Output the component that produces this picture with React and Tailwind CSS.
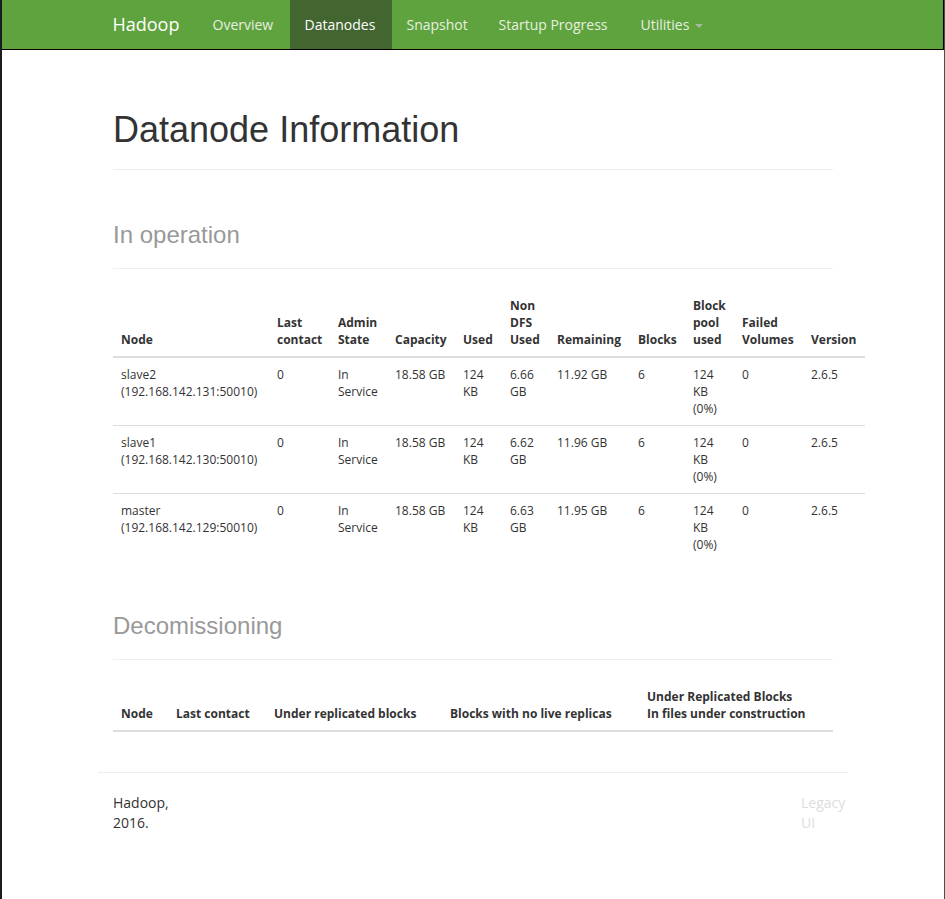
import React from "react";

const bodyFont = { fontFamily: '"Open Sans", "Noto Sans", sans-serif' };

const navItems = [
  { label: "Overview", w: "w-[92px]" },
  { label: "Datanodes", w: "w-[102px]", active: true },
  { label: "Snapshot", w: "w-[92px]" },
  { label: "Startup Progress", w: "w-[142px]" },
];

const rows = [
  ["slave2", "(192.168.142.131:50010)", "6.66", "11.92 GB"],
  ["slave1", "(192.168.142.130:50010)", "6.62", "11.96 GB"],
  ["master", "(192.168.142.129:50010)", "6.63", "11.95 GB"],
];

function Th({ children, className = "" }) {
  return (
    <th className={"px-[8px] py-[8px] text-left align-bottom font-bold whitespace-nowrap " + className}>
      {children}
    </th>
  );
}

function Td({ children }) {
  return <td className="px-[8px] py-[8px] align-top whitespace-nowrap">{children}</td>;
}

export default function App() {
  return (
    <div
      className="min-h-[899px] bg-white border-l-2 border-l-[#1c1c1c] border-r border-r-[#4d4d4d] text-[#333]"
      style={bodyFont}
    >
      {/* Navbar */}
      <div className="h-[50px] bg-[#5fa33e] border-b border-b-black border-r border-r-black">
        <div className="w-[750px] mx-auto flex h-full">
          <div className="w-[100px] pl-[15px] flex items-center text-[18px] text-white h-full">Hadoop</div>
          <div className="flex h-full text-[14px]">
            {navItems.map((it) => (
              <div
                key={it.label}
                className={
                  "h-full flex items-center pl-[15px] " +
                  it.w +
                  (it.active ? " bg-[#43652f] text-white" : " text-[#e8efe0]")
                }
              >
                {it.label}
              </div>
            ))}
            <div className="h-full flex items-center pl-[15px] text-[#e8efe0]">
              Utilities
              <span className="inline-block ml-[6px] mt-[2px] w-0 h-0 border-t-[4px] border-t-[#a9b9a0] border-x-[4px] border-x-transparent" />
            </div>
          </div>
        </div>
      </div>

      {/* Content */}
      <div className="w-[750px] mx-auto">
        <div className="px-[15px]">
          <div className="mt-[60px] pb-[19px] border-b border-[#eee]">
            <h1
              className="text-[36px] leading-[40px] text-[#333]"
              style={{ fontFamily: '"Liberation Sans", Arial, sans-serif' }}
            >
              Datanode Information
            </h1>
          </div>

          <div className="mt-[52px] pb-[20px] border-b border-[#eee]">
            <h2
              className="text-[24px] leading-[26px] text-[#999]"
              style={{ fontFamily: '"Liberation Sans", Arial, sans-serif' }}
            >
              In operation
            </h2>
          </div>

          <table className="mt-[20px] table-fixed w-[752px] border-collapse text-[12px] leading-[17px]">
            <colgroup>
              <col className="w-[156px]" />
              <col className="w-[61px]" />
              <col className="w-[57px]" />
              <col className="w-[68px]" />
              <col className="w-[47px]" />
              <col className="w-[47px]" />
              <col className="w-[81px]" />
              <col className="w-[55px]" />
              <col className="w-[49px]" />
              <col className="w-[69px]" />
              <col className="w-[62px]" />
            </colgroup>
            <thead>
              <tr className="border-b-2 border-[#ddd]">
                <Th>Node</Th>
                <Th>Last<br />contact</Th>
                <Th>Admin<br />State</Th>
                <Th>Capacity</Th>
                <Th>Used</Th>
                <Th>Non<br />DFS<br />Used</Th>
                <Th>Remaining</Th>
                <Th>Blocks</Th>
                <Th>Block<br />pool<br />used</Th>
                <Th>Failed<br />Volumes</Th>
                <Th>Version</Th>
              </tr>
            </thead>
            <tbody>
              {rows.map((r, i) => (
                <tr key={r[0]} className={i > 0 ? "border-t border-[#ddd]" : ""}>
                  <Td>{r[0]}<br />{r[1]}</Td>
                  <Td>0</Td>
                  <Td>In<br />Service</Td>
                  <Td>18.58 GB</Td>
                  <Td>124<br />KB</Td>
                  <Td>{r[2]}<br />GB</Td>
                  <Td>{r[3]}</Td>
                  <Td>6</Td>
                  <Td>124<br />KB<br />(0%)</Td>
                  <Td>0</Td>
                  <Td>2.6.5</Td>
                </tr>
              ))}
            </tbody>
          </table>

          <div className="mt-[52px] pb-[20px] border-b border-[#eee]">
            <h2
              className="text-[24px] leading-[26px] text-[#999]"
              style={{ fontFamily: '"Liberation Sans", Arial, sans-serif' }}
            >
              Decomissioning
            </h2>
          </div>

          <table className="mt-[20px] table-fixed w-[720px] border-collapse text-[12px] leading-[17px]">
            <colgroup>
              <col className="w-[55px]" />
              <col className="w-[98px]" />
              <col className="w-[176px]" />
              <col className="w-[197px]" />
              <col className="w-[194px]" />
            </colgroup>
            <thead>
              <tr className="border-b-2 border-[#ddd]">
                <Th>Node</Th>
                <Th>Last contact</Th>
                <Th>Under replicated blocks</Th>
                <Th>Blocks with no live replicas</Th>
                <Th>Under Replicated Blocks<br />In files under construction</Th>
              </tr>
            </thead>
            <tbody></tbody>
          </table>
        </div>

        {/* Footer */}
        <div className="mt-[40px] border-t border-[#eee] pt-[20px] flex justify-between text-[14px] leading-[20px]">
          <div className="px-[15px]">Hadoop,<br />2016.</div>
          <div className="w-[62px] pl-[15px] text-[#ddd] whitespace-nowrap">Legacy<br />UI</div>
        </div>
      </div>
    </div>
  );
}
